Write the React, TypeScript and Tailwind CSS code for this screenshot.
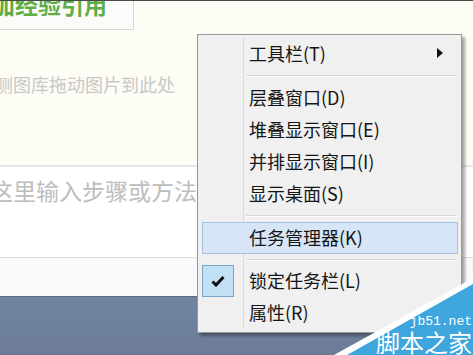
import React from "react";
import clsx from "clsx";

function MenuItem({
  label,
  active,
  checked,
  submenu,
}: {
  label: string;
  active?: boolean;
  checked?: boolean;
  submenu?: boolean;
}) {
  return (
    <div
      className={clsx(
        "flex h-[32px] items-center",
        active && "bg-[#d6e6f7] shadow-[inset_0_0_0_1px_#a8c3e2]"
      )}
    >
      {/* gutter */}
      <div
        className={clsx(
          "flex h-full w-[42px] shrink-0 items-center border-r",
          active ? "border-transparent" : "border-[#dadada]"
        )}
      >
        {checked && (
          <div className="flex h-[32px] w-[32px] items-center justify-center border border-[#7aa3c5] bg-[#c3e1f4]">
            <svg width="14" height="12" viewBox="0 0 14 12">
              <path d="M1.5 6.5 L5 10 L12.5 2" fill="none" stroke="#111" strokeWidth="3" strokeLinejoin="miter" />
            </svg>
          </div>
        )}
      </div>
      <span className="-mt-[2px] flex-1 pl-[5px] text-[18px] leading-none text-[#151515]">{label}</span>
      {submenu && (
        <svg width="6" height="10" viewBox="0 0 6 10" className="mr-[15px] -mt-[2px]">
          <polygon points="0,0 6,5 0,10" fill="#111" />
        </svg>
      )}
    </div>
  );
}

function Separator({ className }: { className: string }) {
  return (
    <div className={clsx("flex", className)}>
      <div className="w-[42px] shrink-0 border-r border-[#dadada]" />
      <div className="flex flex-1 flex-col justify-center pl-[2px] pr-[1px]">
        <div className="h-[1px] bg-[#d7d7d7]" />
        <div className="h-[1px] bg-white" />
      </div>
    </div>
  );
}

export default function App() {
  return (
    <div className="relative flex h-[355px] w-[473px] flex-col overflow-hidden bg-[#fdfcf5] font-['Noto_Sans_CJK_SC','Liberation_Sans',sans-serif]">
      {/* top edge */}
      <div className="h-[1px] shrink-0 bg-[#4a4a4a]" />

      {/* image drop area */}
      <div className="flex h-[164px] shrink-0 flex-col">
        <div className="h-[29px] w-[134px] overflow-hidden border-r border-b border-[#d6d6d6] bg-[#fbfbfa]">
          <div className="-mt-[8px] -ml-[8px] whitespace-nowrap text-[23px] font-bold leading-none text-[#5fae45]">
            加经验引用
          </div>
        </div>
        <div className="-ml-[5px] mt-[45px] whitespace-nowrap text-[18px] leading-none text-[#c8c8c8]">
          侧图库拖动图片到此处
        </div>
      </div>
      <div className="h-[2px] shrink-0 bg-[#e6e6e6]" />

      {/* step input */}
      <div className="h-[90px] shrink-0 bg-white">
        <div className="-ml-[10px] mt-[12px] whitespace-nowrap text-[23px] leading-none text-[#bdbdbd]">
          这里输入步骤或方法
        </div>
      </div>
      <div className="h-[1px] shrink-0 bg-[#dcdcdc]" />
      <div className="h-[38px] shrink-0 bg-[#f9f8fa]" />
      <div className="h-[1px] shrink-0 bg-[#5b6a82]" />

      {/* taskbar */}
      <div className="flex-1 bg-gradient-to-b from-[#7284a0] to-[#6c7c97]" />

      {/* context menu */}
      <div className="absolute left-[197px] top-[34px] w-[265px] border border-[#979797] bg-[#f0f0f0] pt-[3px] pb-[3px] pl-[4px] pr-[3px] shadow-[3px_3px_3px_rgba(0,0,0,0.35)]">
        <MenuItem label="工具栏(T)" submenu />
        <Separator className="h-[12px]" />
        <MenuItem label="层叠窗口(D)" />
        <MenuItem label="堆叠显示窗口(E)" />
        <MenuItem label="并排显示窗口(I)" />
        <MenuItem label="显示桌面(S)" />
        <Separator className="h-[12px]" />
        <MenuItem label="任务管理器(K)" active />
        <Separator className="h-[11px]" />
        <MenuItem label="锁定任务栏(L)" checked />
        <MenuItem label="属性(R)" />
      </div>

      {/* watermark */}
      <div className="absolute right-0 bottom-0 flex h-[80px] w-[140px] flex-col items-end justify-end pb-[1px] pr-[1px]">
        <svg className="absolute inset-0" width="140" height="80" viewBox="333 275 140 80">
          <polygon points="334,355 473,278 473,355" fill="#ffffff" />
          <polygon points="347,355 473,284 473,355" fill="#3ea6dc" />
        </svg>
        <div className="relative mb-[2px] h-[13px] font-['Liberation_Mono',monospace] text-[13px] leading-none text-white">
          jb51.net
        </div>
        <div className="relative h-[24px] text-[24px] leading-none text-white">脚本之家</div>
      </div>
    </div>
  );
}
